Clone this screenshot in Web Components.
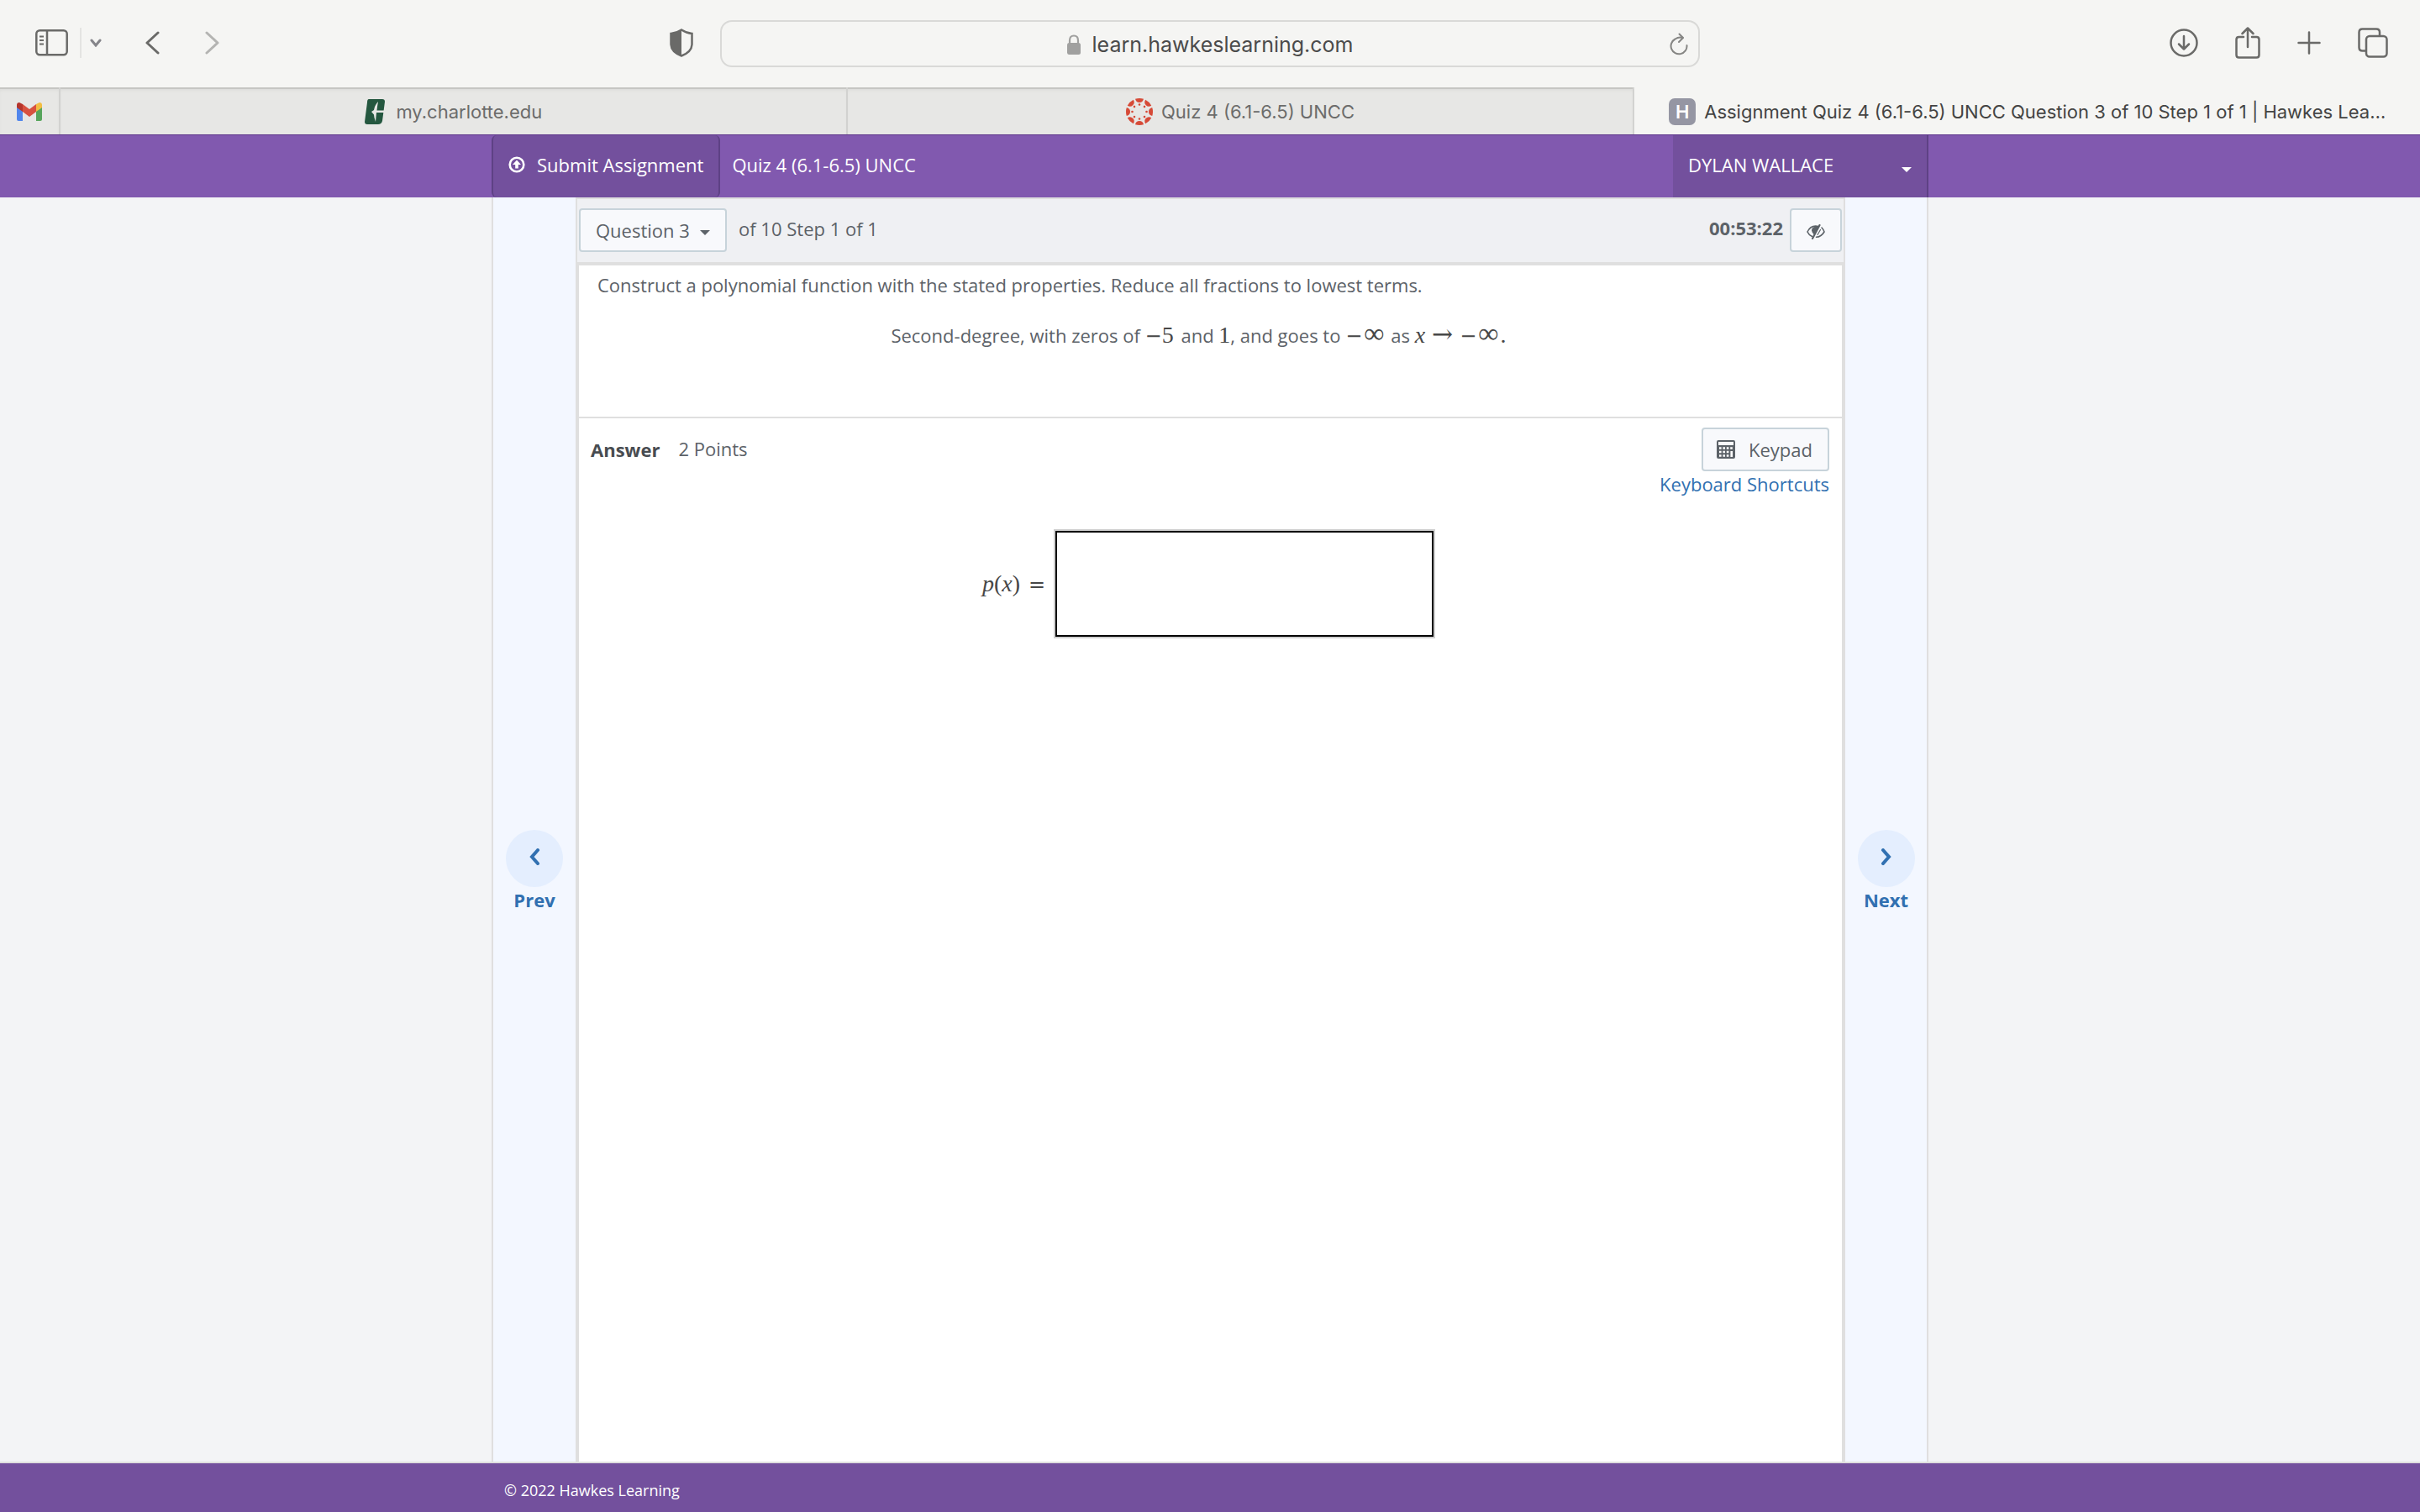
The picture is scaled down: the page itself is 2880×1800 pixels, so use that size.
<!DOCTYPE html>
<html lang="en">
<head>
<meta charset="utf-8">
<title>Assignment Quiz 4 (6.1-6.5) UNCC</title>
<style>
  :root {
    --purple: #8159af;
    --purple-dark: #73509d;
    --purple-line: #5e4185;
    --line: #dfdfdf;
    --button-line: #c7d3da;
    --button-fill: #f8f9fc;
    --text: #5c6268;
    --link: #3170b1;
  }

  body {
    margin: 0;
    min-height: 100vh;
    display: flex;
    flex-direction: column;
    background: #f3f4f6;
    color: var(--text);
    font: 22px/30px "Open Sans", "Noto Sans", sans-serif;
  }

  quiz-layout {
    flex: 1;
  }

  browser-tab[pinned] + browser-tab {
    border-left: 0;
  }
</style>
</head>
<body>

<browser-toolbar></browser-toolbar>
<browser-tabs>
  <browser-tab pinned label="Gmail">
    <svg slot="icon" width="30" height="22" viewBox="0 0 30 22">
      <path d="M0 4h7v18H2q-2 0-2-2z" fill="#5186ec"/>
      <path d="M23 4h7v16q0 2-2 2h-5z" fill="#57a55c"/>
      <path d="M0 3q0-3 3-3l4 2v9L0 6z" fill="#b5352c"/>
      <path d="M30 3q0-3-3-3l-4 2v9l7-5z" fill="#f2bd42"/>
      <path d="M7 2l8 6 8-6v9l-8 6-8-6z" fill="#d85140"/>
    </svg>
  </browser-tab>
  <browser-tab>
    <svg slot="icon" width="28" height="30" viewBox="-1 0 28 30">
      <path d="M5 0h16q3 0 3 3l-3 23q-1 4-5 4H3q-3 0-3-3L3 4q0-4 2-4z" fill="#24573f"/>
      <path d="M16 3q-1 5-1.500 10.500H24v2.500H14q-.5 5-1 11-2-5-2-8.500L8 15l3-2q1-6 5-10z" fill="#e7e7e5"/>
    </svg>
    my.charlotte.edu
  </browser-tab>
  <browser-tab>
    <svg slot="icon" width="32" height="32" viewBox="-16 -16 32 32" fill="#d64a37">
      <g id="spoke"><path d="M-5-15.200Q0-16.800 5-15.200Q4-11 0-11T-5-15.200z"/><circle cy="-8.500" r="1.300"/></g>
      <use href="#spoke" transform="rotate(45)"/>
      <use href="#spoke" transform="rotate(90)"/>
      <use href="#spoke" transform="rotate(135)"/>
      <use href="#spoke" transform="rotate(180)"/>
      <use href="#spoke" transform="rotate(225)"/>
      <use href="#spoke" transform="rotate(270)"/>
      <use href="#spoke" transform="rotate(315)"/>
    </svg>
    Quiz 4 (6.1-6.5) UNCC
  </browser-tab>
  <browser-tab current>
    <letter-badge slot="icon">H</letter-badge>
    Assignment Quiz 4 (6.1-6.5) UNCC Question 3 of 10 Step 1 of 1 | Hawkes Lea…
  </browser-tab>
</browser-tabs>

<quiz-header user="DYLAN WALLACE">Quiz 4 (6.1-6.5) UNCC</quiz-header>

<quiz-layout>
  <page-nav slot="prev" direction="prev">Prev</page-nav>
  <question-bar time="00:53:22">of 10 Step 1 of 1</question-bar>
  <question-text>
    Construct a polynomial function with the stated properties. Reduce all fractions to lowest terms.
    <math-line slot="detail"></math-line>
  </question-text>
  <answer-panel points="2 Points"></answer-panel>
  <page-nav slot="next" direction="next">Next</page-nav>
</quiz-layout>

<quiz-footer>© 2022 Hawkes Learning</quiz-footer>

<script>
/*
*   Base class: attaches an open shadow root with styles and markup
*/

class BaseElement extends HTMLElement {
  constructor () {
    super();
    this.attachShadow({ mode: 'open' });
  }

  connectedCallback () {
    this.shadowRoot.innerHTML = `<style>${resetStyles}${this.styles()}</style>${this.markup()}`;
  }
}

const resetStyles = `
  :host, * { box-sizing: border-box; }
  svg { display: block; flex: none; }
  button, input, select {
    margin: 0;
    padding: 0;
    border: 0;
    background: none;
    color: inherit;
    font: inherit;
  }
`;

/*
*   Browser window
*/

class BrowserToolbar extends BaseElement {
  styles () {
    return `
      :host {
        display: grid;
        grid-template-columns: 1fr minmax(0, 1166px) 1fr;
        align-items: center;
        height: 104px;
        background: #f5f5f3;
        color: #6a6a68;
        font: 25px/32px Inter, sans-serif;
      }
      .group { display: flex; align-items: center; }
      .left { padding: 0 32px 2px 42px; }
      .shield { margin-left: auto; }
      .divider { width: 2px; height: 36px; margin: 0 10px 0 14px; background: #e4e4e2; }
      .back { margin-left: 52px; }
      .forward { margin-left: 54px; color: #b4b4b2; }
      .field {
        display: grid;
        grid-template-columns: 1fr auto 1fr;
        align-items: center;
        height: 56px;
        padding: 2px 12px 0;
        border: 2px solid #d9d9d7;
        border-radius: 14px;
      }
      .address { grid-column: 2; display: flex; align-items: center; gap: 14px; color: #4b4b4b; }
      .address input { field-sizing: content; height: 32px; }
      .reload { justify-self: end; }
      .right { justify-content: flex-end; gap: 44px; padding: 0 38px 2px 0; }
    `;
  }

  markup () {
    return `
      <div class="group left">
        <button aria-label="Sidebar">
          <svg width="39" height="32" viewBox="0 0 39 32" fill="none" stroke="currentColor" stroke-width="2.500">
            <rect x="1.300" y="1.300" width="36.400" height="29" rx="4"/>
            <path d="M14 1v29"/>
            <path d="M5 8.500h5M5 13h5M5 17.500h5" stroke-width="2"/>
          </svg>
        </button>
        <span class="divider"></span>
        <button aria-label="Tab groups">
          <svg width="14" height="10" viewBox="0 0 14 10" fill="none" stroke="#85858a" stroke-width="3" stroke-linecap="round"><path d="M2 2l5 6 5-6"/></svg>
        </button>
        <button class="back" aria-label="Back">
          <svg width="17" height="28" viewBox="0 0 17 28" fill="none" stroke="currentColor" stroke-width="3" stroke-linecap="round" stroke-linejoin="round"><path d="M15 2L2 14l13 12"/></svg>
        </button>
        <button class="forward" aria-label="Forward">
          <svg width="17" height="28" viewBox="0 0 17 28" fill="none" stroke="currentColor" stroke-width="3" stroke-linecap="round" stroke-linejoin="round"><path d="M2 2l13 12L2 26"/></svg>
        </button>
        <button class="shield" aria-label="Privacy report">
          <svg width="28" height="34" viewBox="0 0 28 34">
            <path d="M14 1.500Q20 5.500 26.500 6v13Q26 28 14 32.500Q2 28 1.500 19V6Q8 5.500 14 1.500z" fill="none" stroke="currentColor" stroke-width="2.500"/>
            <path d="M14 1v32Q2 28 1 19V6Q8 5 14 1z" fill="currentColor"/>
          </svg>
        </button>
      </div>
      <div class="field">
        <label class="address">
          <svg width="16" height="24" viewBox="0 0 16 24">
            <path d="M3 11V7q0-5.500 5-5.500T13 7v4" fill="none" stroke="#a0a09f" stroke-width="2.200"/>
            <rect y="10" width="16" height="14" rx="2.500" fill="#a0a09f"/>
          </svg>
          <input type="text" value="learn.hawkeslearning.com" aria-label="Address">
        </label>
        <button class="reload" aria-label="Reload">
          <svg width="22" height="28" viewBox="0 0 22 28" fill="none" stroke="#858583" stroke-width="2" stroke-linecap="round" stroke-linejoin="round">
            <path d="M15.500 6Q11 4.500 6.500 7.500A9.500 9.500 0 1 0 20.500 15"/><path d="M11.500 1.500L16 6l-5 5"/>
          </svg>
        </button>
      </div>
      <div class="group right">
        <button aria-label="Downloads">
          <svg width="34" height="34" viewBox="0 0 34 34" fill="none" stroke="currentColor" stroke-width="2.500" stroke-linecap="round" stroke-linejoin="round">
            <circle cx="17" cy="17" r="15.500"/><path d="M17 9v15.500M11 18.500l6 6 6-6"/>
          </svg>
        </button>
        <button aria-label="Share">
          <svg width="30" height="38" viewBox="0 0 30 38" fill="none" stroke="currentColor" stroke-width="2.500" stroke-linecap="round" stroke-linejoin="round">
            <path d="M10 12H4.500Q1.500 12 1.500 15v18.500q0 3 3 3h21q3 0 3-3V15q0-3-3-3H20"/><path d="M15 24V2M8.500 8L15 1.500 21.500 8"/>
          </svg>
        </button>
        <button aria-label="New tab">
          <svg width="28" height="28" viewBox="0 0 28 28" fill="none" stroke="currentColor" stroke-width="2.500" stroke-linecap="round"><path d="M14 1.500v25M1.500 14h25"/></svg>
        </button>
        <button aria-label="Tab overview">
          <svg width="36" height="36" viewBox="0 0 36 36" fill="none" stroke="currentColor" stroke-width="2.500">
            <rect x="10" y="10" width="24.500" height="24.500" rx="4"/>
            <path d="M10 27.500H5.500q-4 0-4-4v-18q0-4 4-4H22q4 0 4 4V10"/>
          </svg>
        </button>
      </div>
    `;
  }
}

class BrowserTabs extends BaseElement {
  styles () {
    return `
      :host {
        display: flex;
        height: 56px;
        color: #6c6c6b;
        font: 22px/28px Inter, sans-serif;
      }
    `;
  }

  markup () {
    return '<slot></slot>';
  }
}

class BrowserTab extends BaseElement {
  styles () {
    return `
      :host {
        flex: 1;
        min-width: 0;
        display: flex;
        border-left: 2px solid #d2d2d0;
        background: #e7e7e5;
        box-shadow: inset 0 2px #c6c6c3, inset 0 5px 4px -2px #d9d9d6;
      }
      :host([pinned]) {
        flex: none;
        width: 72px;
        border-left: 0;
        border-right: 2px solid #d2d2d0;
      }
      :host([current]) { background: #f5f5f3; color: #444443; box-shadow: none; }
      button {
        flex: 1;
        min-width: 0;
        display: flex;
        align-items: center;
        justify-content: center;
        gap: 10px;
        padding-top: 2px;
      }
      span { overflow: hidden; white-space: nowrap; text-overflow: ellipsis; }
      :host([pinned]) span { display: none; }
    `;
  }

  markup () {
    const label = this.getAttribute('label');
    return `
      <button${label ? ` aria-label="${label}"` : ''}>
        <slot name="icon"></slot>
        <span><slot></slot></span>
      </button>
    `;
  }
}

class LetterBadge extends BaseElement {
  styles () {
    return `
      :host {
        flex: none;
        display: grid;
        place-items: center;
        width: 32px;
        height: 32px;
        border-radius: 7px;
        background: #9596a3;
        color: white;
        font-weight: 600;
      }
    `;
  }

  markup () {
    return '<slot></slot>';
  }
}

/*
*   Quiz header and footer
*/

class QuizHeader extends BaseElement {
  styles () {
    return `
      :host {
        display: block;
        border-top: 1px solid #5b3489;
        background: var(--purple);
        color: white;
      }
      header {
        display: flex;
        align-items: stretch;
        max-width: 1710px;
        height: 74px;
        margin: 0 auto;
      }
      button { display: flex; align-items: center; background: var(--purple-dark); }
      .submit {
        gap: 14px;
        padding: 0 18px 4px;
        border: 2px solid var(--purple-line);
        border-width: 0 2px;
        border-radius: 6px;
      }
      .title { align-self: center; padding: 0 14px 4px; }
      .user {
        justify-content: space-between;
        width: 304px;
        margin-left: auto;
        padding: 0 18px 4px;
        border-right: 2px solid var(--purple-line);
      }
      .caret { margin-top: 12px; }
    `;
  }

  markup () {
    return `
      <header>
        <button class="submit">
          <svg width="20" height="20" viewBox="0 0 20 20">
            <circle cx="10" cy="10" r="8.300" fill="none" stroke="currentColor" stroke-width="2.600"/>
            <path d="M10 4.500l5 5.500h-3.200v4.500H8.200V10H5z" fill="currentColor"/>
          </svg>
          Submit Assignment
        </button>
        <span class="title"><slot></slot></span>
        <button class="user" aria-haspopup="true">
          ${this.getAttribute('user')}
          <svg class="caret" width="12" height="6" viewBox="0 0 12 6"><path d="M0 0h12L6 6z" fill="currentColor"/></svg>
        </button>
      </header>
    `;
  }
}

class QuizFooter extends BaseElement {
  styles () {
    return `
      :host {
        display: block;
        border-top: 2px solid var(--line);
        background: var(--purple-dark);
        color: white;
        font-size: 18px;
        line-height: 26px;
      }
      footer { max-width: 1680px; margin: 0 auto; padding: 19px 0 13px; }
    `;
  }

  markup () {
    return '<footer><slot></slot></footer>';
  }
}

/*
*   Page body: two rails with the question column between them
*/

class QuizLayout extends BaseElement {
  styles () {
    return `
      :host {
        display: grid;
        grid-template-columns: 98px minmax(0, 1fr) 97px;
        width: 100%;
        max-width: 1710px;
        margin: 0 auto;
        border: 2px solid var(--line);
        border-width: 0 2px;
        background: #f3f7ff;
      }
      main { display: flex; flex-direction: column; }
    `;
  }

  markup () {
    return `
      <slot name="prev"></slot>
      <main><slot></slot></main>
      <slot name="next"></slot>
    `;
  }
}

class PageNav extends BaseElement {
  styles () {
    return `
      :host {
        display: grid;
        grid-template-rows: 1fr 1fr;
        color: var(--link);
        font-weight: 700;
      }
      a {
        grid-row: 2;
        display: flex;
        flex-direction: column;
        align-items: center;
        color: inherit;
        text-decoration: none;
      }
      .circle {
        display: grid;
        place-items: center;
        width: 68px;
        height: 68px;
        padding-bottom: 4px;
        border-radius: 50%;
        background: #e4eefe;
      }
    `;
  }

  markup () {
    const arrow = this.getAttribute('direction') === 'prev' ? 'M10 2L3 10l7 8' : 'M3 2l7 8-7 8';
    return `
      <a href="#">
        <span class="circle">
          <svg width="13" height="20" viewBox="0 0 13 20" fill="none" stroke="currentColor" stroke-width="4" stroke-linecap="round"><path d="${arrow}"/></svg>
        </span>
        <slot></slot>
      </a>
    `;
  }
}

const boxStyles = `
  .box {
    height: 52px;
    border: 2px solid var(--button-line);
    border-radius: 4px;
    background: var(--button-fill);
  }
`;

class QuestionBar extends BaseElement {
  styles () {
    return `
      ${boxStyles}
      :host {
        display: flex;
        align-items: flex-start;
        height: 77px;
        padding: 11px 2px 0;
        border: 2px solid var(--line);
        border-bottom: 0;
        background: #eff0f3;
      }
      .picker { display: grid; align-items: center; }
      .picker > * { grid-area: 1 / 1; }
      select { appearance: none; padding: 0 42px 0 18px; }
      .caret { justify-self: end; margin: 6px 20px 0 0; pointer-events: none; }
      .step { margin: 9px 0 0 14px; }
      time { margin: 8px 8px 0 auto; font-weight: 700; }
      .toggle { display: grid; place-items: center; width: 62px; padding-top: 4px; }
    `;
  }

  markup () {
    return `
      <label class="picker">
        <select class="box" aria-label="Question"><option>Question 3</option></select>
        <svg class="caret" width="12" height="6" viewBox="0 0 12 6"><path d="M0 0h12L6 6z" fill="currentColor"/></svg>
      </label>
      <span class="step"><slot></slot></span>
      <time>${this.getAttribute('time')}</time>
      <button class="box toggle" aria-label="Hide timer">
        <svg width="22" height="18" viewBox="0 0 22 18" fill="none" stroke="currentColor" stroke-width="1.600" stroke-linecap="round">
          <path d="M14 2.500Q5 .5 1 9q1.500 3.500 5.500 5.500"/>
          <path d="M18 4Q20 6 21 9q-3.500 6-9.500 6.300"/>
          <path d="M15.500 1L7 17" stroke-width="2.200"/>
          <path d="M16.500 6.500l-3.500 6" stroke-width="1.200"/>
          <path d="M14 3Q6 2 6 7.500q.5 3 3 5z" fill="currentColor" stroke="none"/>
        </svg>
      </button>
    `;
  }
}

class QuestionText extends BaseElement {
  styles () {
    return `
      :host {
        display: block;
        min-height: 186px;
        border: 4px solid var(--line);
        border-bottom-width: 2px;
        background: white;
      }
      p { margin: 0; padding: 8px 22px; }
    `;
  }

  markup () {
    return `
      <p><slot></slot></p>
      <slot name="detail"></slot>
    `;
  }
}

const mathStyles = `
  .math { color: #474747; font: 28px/30px "Liberation Serif", serif; }
  .op { font: 24px/1 "DejaVu Serif", serif; }
`;

class MathLine extends BaseElement {
  styles () {
    return `
      ${mathStyles}
      :host { display: block; padding: 22px 28px 0 0; text-align: center; }
      .number { margin-right: 3px; }
      .inf { margin: 0 2px; font-size: 34px; line-height: 1px; }
      .to { margin: 0 8px; font-size: 30px; line-height: 1px; }
    `;
  }

  markup () {
    return `Second-degree, with zeros of <span class="math number"><span class="op">−</span>5</span>
      and <span class="math">1</span>, and goes to
      <span class="math"><span class="op">−</span><span class="inf">∞</span></span> as
      <span class="math"><i>x</i><span class="op to">→</span><span class="op">−</span><span class="inf">∞</span>.</span>`;
  }
}

class AnswerPanel extends BaseElement {
  styles () {
    return `
      ${boxStyles}
      ${mathStyles}
      :host {
        flex: 1;
        display: block;
        border: 4px solid var(--line);
        border-width: 0 4px;
        background: white;
      }
      .head { display: flex; align-items: flex-start; padding: 11px 15px 0 14px; }
      h2 { margin: 11px 22px 0 0; color: #484c51; font: inherit; font-weight: 700; }
      .points { margin-top: 10px; }
      .tools { display: flex; flex-direction: column; align-items: flex-end; margin-left: auto; }
      .keypad { display: flex; align-items: center; gap: 16px; padding: 0 18px 0 16px; }
      a { color: var(--link); text-decoration: none; }
      .answer {
        display: flex;
        align-items: center;
        justify-content: center;
        gap: 10px;
        margin-top: 39px;
        padding-right: 4px;
      }
      .equals { margin-left: 10px; }
      .answer input {
        width: 454px;
        height: 130px;
        padding: 0 16px;
        border: 2px solid #cfcfcf;
        outline: 2px solid black;
        outline-offset: -4px;
      }
    `;
  }

  markup () {
    return `
      <div class="head">
        <h2>Answer</h2>
        <span class="points">${this.getAttribute('points')}</span>
        <div class="tools">
          <button class="box keypad">
            <svg width="22" height="22" viewBox="0 0 22 22">
              <rect x="1" y="1" width="20" height="20" rx="1" fill="none" stroke="currentColor" stroke-width="2"/>
              <path d="M1 6h20v15H1z" fill="currentColor"/>
              <path d="M3 9.500h16M3 14h12M3 18.500h12" stroke="white" stroke-width="2.600" stroke-dasharray="2.600 1.800"/>
              <path d="M17.700 13v7" stroke="white" stroke-width="2.600"/>
            </svg>
            Keypad
          </button>
          <a href="#">Keyboard Shortcuts</a>
        </div>
      </div>
      <label class="answer math">
        <span><i>p</i>(<i>x</i>)<span class="op equals">=</span></span>
        <input type="text" aria-label="p(x)">
      </label>
    `;
  }
}

customElements.define('browser-toolbar', BrowserToolbar);
customElements.define('browser-tabs', BrowserTabs);
customElements.define('browser-tab', BrowserTab);
customElements.define('letter-badge', LetterBadge);
customElements.define('quiz-header', QuizHeader);
customElements.define('quiz-footer', QuizFooter);
customElements.define('quiz-layout', QuizLayout);
customElements.define('page-nav', PageNav);
customElements.define('question-bar', QuestionBar);
customElements.define('question-text', QuestionText);
customElements.define('math-line', MathLine);
customElements.define('answer-panel', AnswerPanel);
</script>
</body>
</html>
